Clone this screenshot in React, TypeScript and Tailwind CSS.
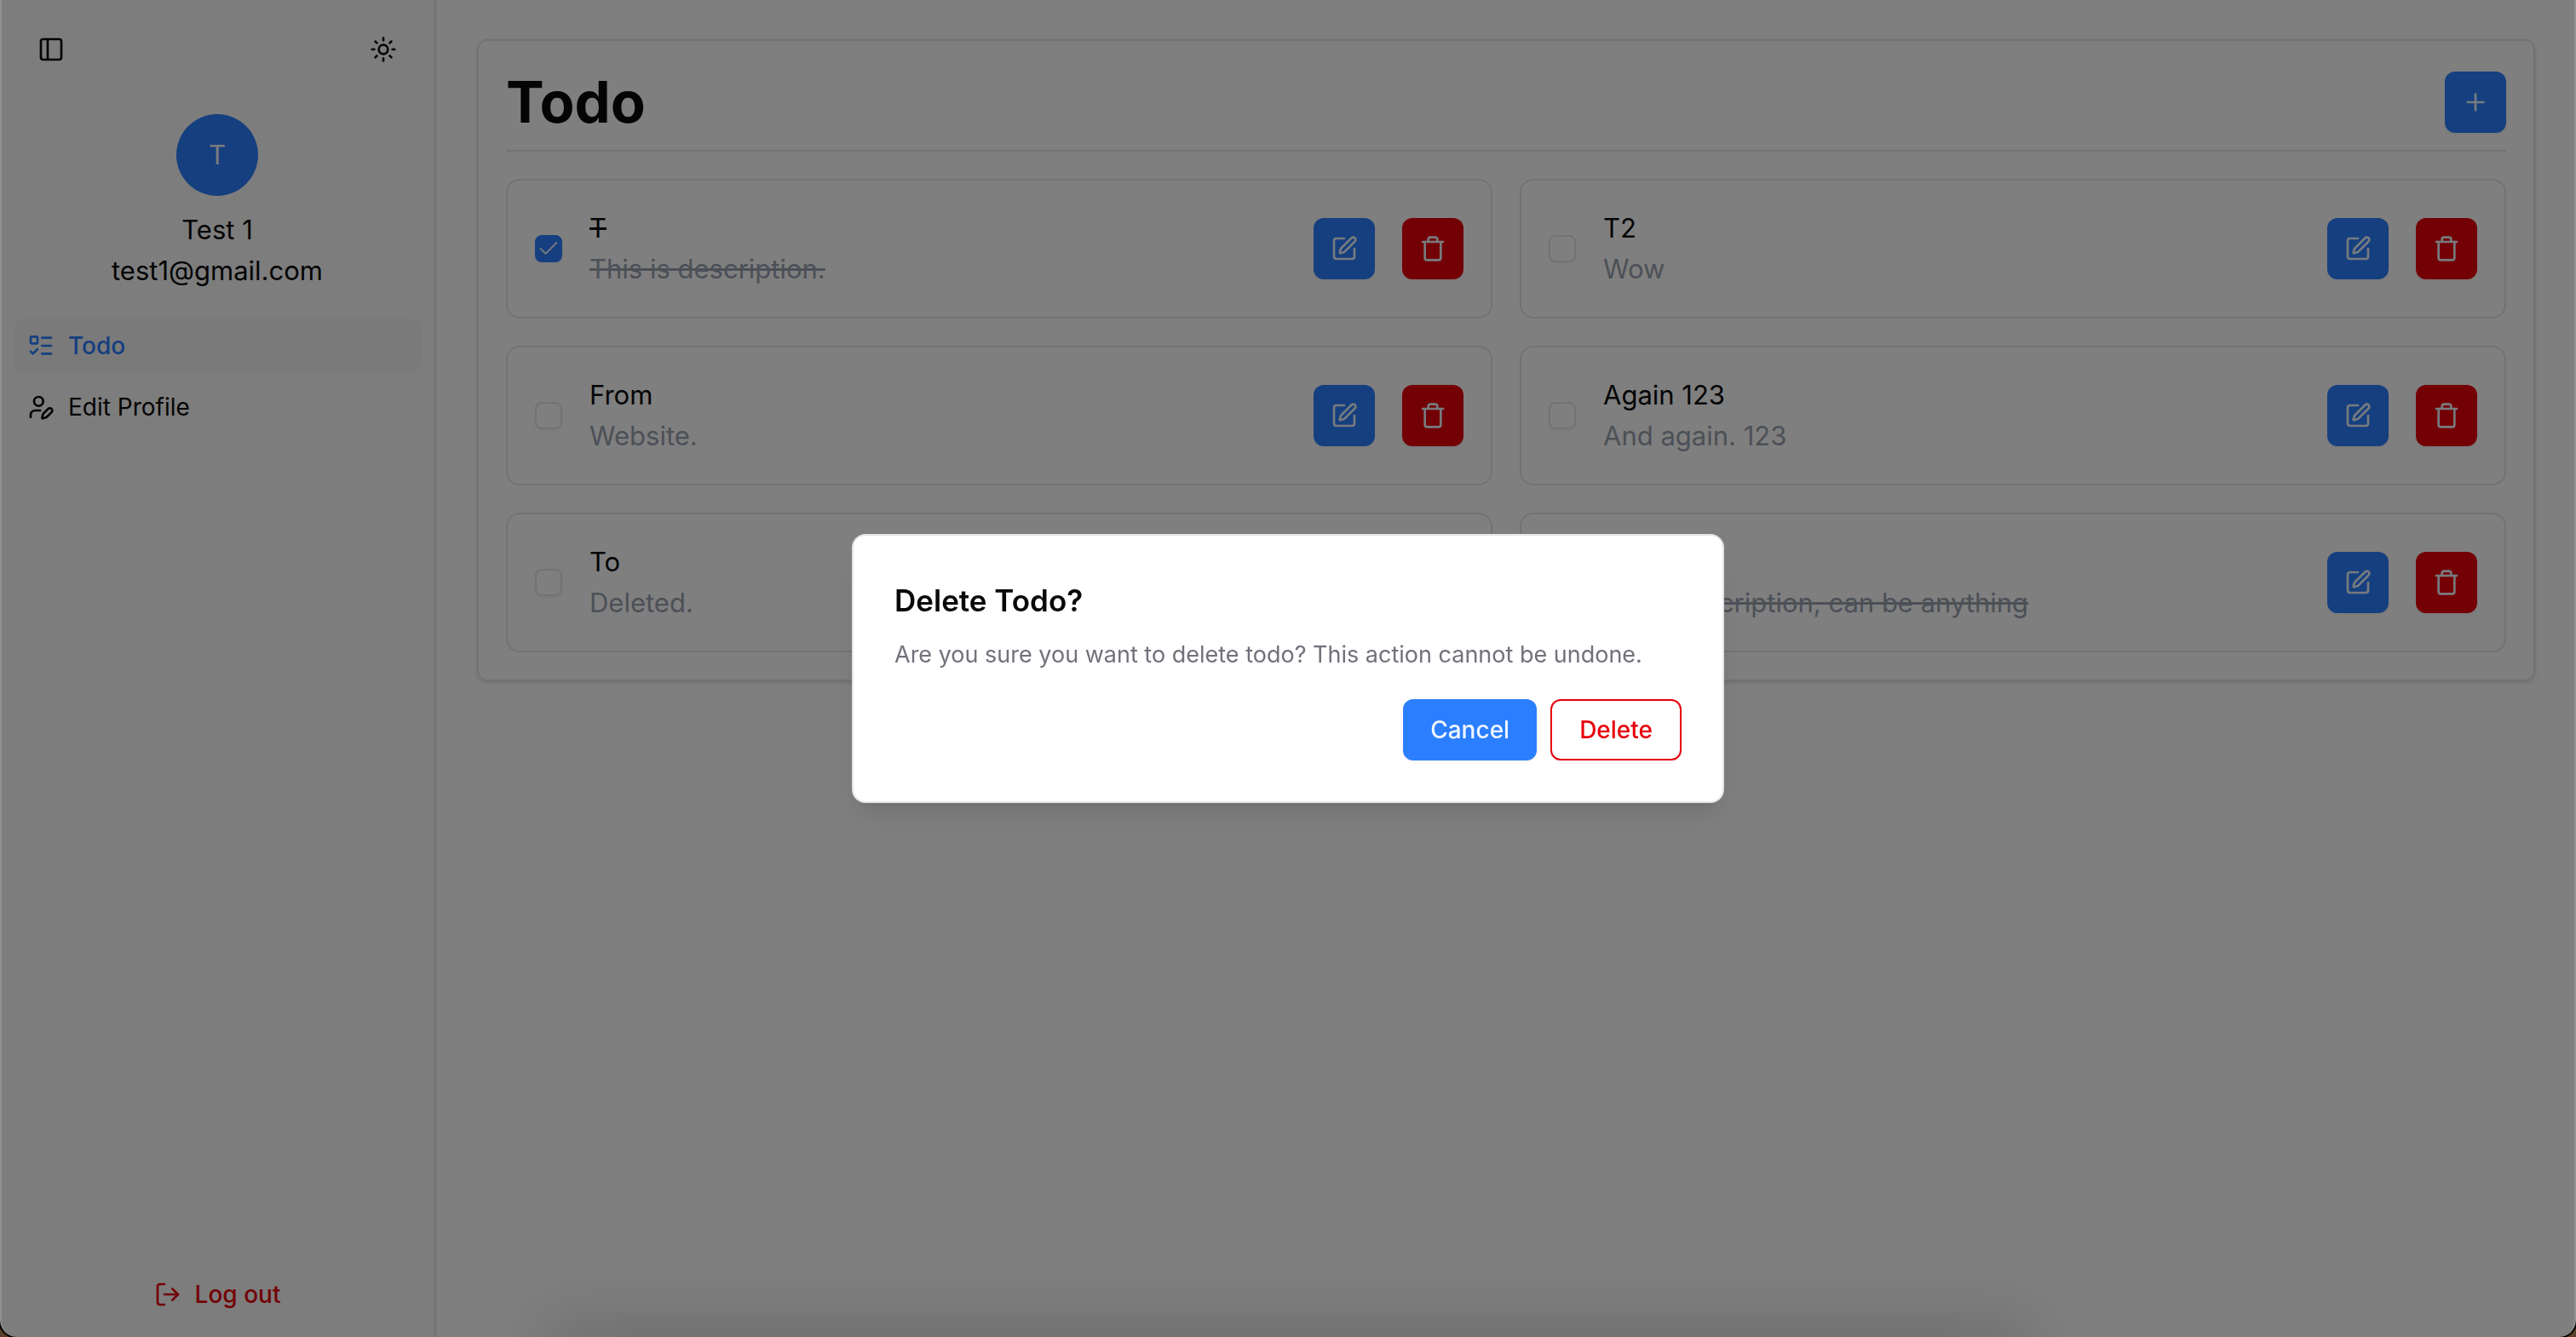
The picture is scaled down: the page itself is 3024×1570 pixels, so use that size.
import React from "react";
import { ListTodo, LogOut, PanelLeft, Plus, SquarePen, Sun, Trash, UserPen } from "lucide-react";

type Todo = { title: string; description: string; done: boolean };

const todos: Todo[] = [
  { title: "T", description: "This is description.", done: true },
  { title: "T2", description: "Wow", done: false },
  { title: "From", description: "Website.", done: false },
  { title: "Again 123", description: "And again. 123", done: false },
  { title: "To", description: "Deleted.", done: false },
  { title: "Todo", description: "Todo description, can be anything", done: true },
];

const iconButton =
  "flex size-[72px] shrink-0 items-center justify-center rounded-xl text-blue-50 shadow-[0_2px_4px_rgba(0,0,0,0.05)]";

function Sidebar() {
  return (
    <aside className="flex w-[512px] shrink-0 flex-col border-r-2 border-zinc-200 bg-[#fafafa] pt-[30px] pb-4">
      <div className="flex justify-between px-8">
        <button aria-label="Toggle sidebar" className="flex size-14 items-center justify-center">
          <PanelLeft size={32} />
        </button>
        <button aria-label="Toggle theme" className="flex size-14 items-center justify-center">
          <Sun size={32} />
        </button>
      </div>
      <div className="mt-12 flex flex-col items-center text-[31px] leading-[48px]">
        <div className="mb-4 flex size-24 items-center justify-center rounded-full bg-blue-500 text-blue-50">T</div>
        <p>Test 1</p>
        <p>test1@gmail.com</p>
      </div>
      <nav className="mt-8 flex flex-col gap-2 px-4 text-[28px] leading-10">
        <a href="#todo" className="flex h-16 items-center gap-4 rounded-xl bg-zinc-100 px-4 font-medium text-blue-500">
          <ListTodo size={32} />
          Todo
        </a>
        <a href="#profile" className="flex h-16 items-center gap-4 rounded-xl px-4">
          <UserPen size={32} />
          Edit Profile
        </a>
      </nav>
      <button className="mt-auto flex h-[68px] items-center justify-center gap-4 self-center text-[28px] font-medium text-red-600">
        <LogOut size={32} />
        Log out
      </button>
    </aside>
  );
}

function TodoCard({ todo }: { todo: Todo }) {
  return (
    <li className="flex items-center gap-8 rounded-2xl border-2 border-zinc-200 p-8">
      <span className="relative flex size-8 shrink-0">
        <input
          type="checkbox"
          aria-label={todo.title}
          defaultChecked={todo.done}
          className="peer size-8 appearance-none rounded-lg border-2 border-zinc-200 shadow-[0_2px_4px_rgba(0,0,0,0.05)] checked:border-blue-500 checked:bg-blue-500"
        />
        <svg
          viewBox="0 0 24 24"
          className="pointer-events-none absolute inset-0 m-auto hidden size-7 fill-none stroke-blue-50 stroke-[1.7] peer-checked:block"
          strokeLinecap="round"
          strokeLinejoin="round"
        >
          <path d="M20 6 9 17l-5-5" />
        </svg>
      </span>
      <div className="flex-1 text-[31px] leading-[48px]">
        <p className={todo.done ? "line-through" : ""}>{todo.title}</p>
        <p className={todo.done ? "text-gray-400 line-through" : "text-gray-400"}>{todo.description}</p>
      </div>
      <button aria-label="Edit" className={`${iconButton} bg-blue-500`}>
        <SquarePen size={32} />
      </button>
      <button aria-label="Delete" className={`${iconButton} bg-red-600`}>
        <Trash size={32} />
      </button>
    </li>
  );
}

function DeleteDialog() {
  return (
    <div className="fixed inset-0 flex items-center justify-center bg-black/50">
      <div
        role="alertdialog"
        aria-labelledby="dialog-title"
        aria-describedby="dialog-text"
        className="flex w-full max-w-[1024px] flex-col gap-8 rounded-2xl border-2 border-zinc-200 bg-white p-12 shadow-[0_20px_30px_-6px_rgba(0,0,0,0.1),0_8px_12px_-8px_rgba(0,0,0,0.1)]"
      >
        <div className="flex flex-col gap-4">
          <h2 id="dialog-title" className="text-[35px] leading-[56px] font-semibold">
            Delete Todo?
          </h2>
          <p id="dialog-text" className="text-[27px] leading-10 whitespace-nowrap text-zinc-500">
            Are you sure you want to delete todo? This action cannot be undone.
          </p>
        </div>
        <div className="flex justify-end gap-4 text-[28px] font-medium">
          <button className="h-[72px] rounded-xl bg-blue-500 px-8 text-blue-50 shadow-[0_2px_4px_rgba(0,0,0,0.05)]">
            Cancel
          </button>
          <button className="h-[72px] rounded-xl border-2 border-red-600 bg-white px-8 text-red-600 shadow-[0_2px_4px_rgba(0,0,0,0.05)]">
            Delete
          </button>
        </div>
      </div>
    </div>
  );
}

export default function App() {
  return (
    <div className="relative flex min-h-screen overflow-hidden bg-white font-['Inter',sans-serif] text-zinc-950">
      <Sidebar />
      <main className="flex-1 px-12 pt-[46px]">
        <section className="rounded-xl border-2 border-zinc-200 p-8 shadow-[0_2px_6px_rgba(0,0,0,0.1),0_2px_4px_-2px_rgba(0,0,0,0.1)]">
          <header className="flex items-center justify-between border-b-2 border-zinc-200 pb-4">
            <h1 className="text-[67px] leading-[80px] font-bold">Todo</h1>
            <button aria-label="Add todo" className={`${iconButton} bg-blue-500`}>
              <Plus size={32} />
            </button>
          </header>
          <ul className="mt-8 grid grid-cols-2 gap-8">
            {todos.map((todo) => (
              <TodoCard key={todo.title} todo={todo} />
            ))}
          </ul>
        </section>
      </main>
      <DeleteDialog />
      <div className="pointer-events-none fixed inset-x-0 bottom-0 flex justify-center">
        <div className="h-0 w-[56%] shadow-[0_16px_80px_20px_rgba(0,0,0,0.25)]" />
      </div>
      <div className="pointer-events-none fixed inset-x-0 -top-8 bottom-0 rounded-b-[20px] border-x-2 border-white/15 shadow-[0_0_0_2px_#000,0_0_0_20px_#5a4028]" />
    </div>
  );
}
